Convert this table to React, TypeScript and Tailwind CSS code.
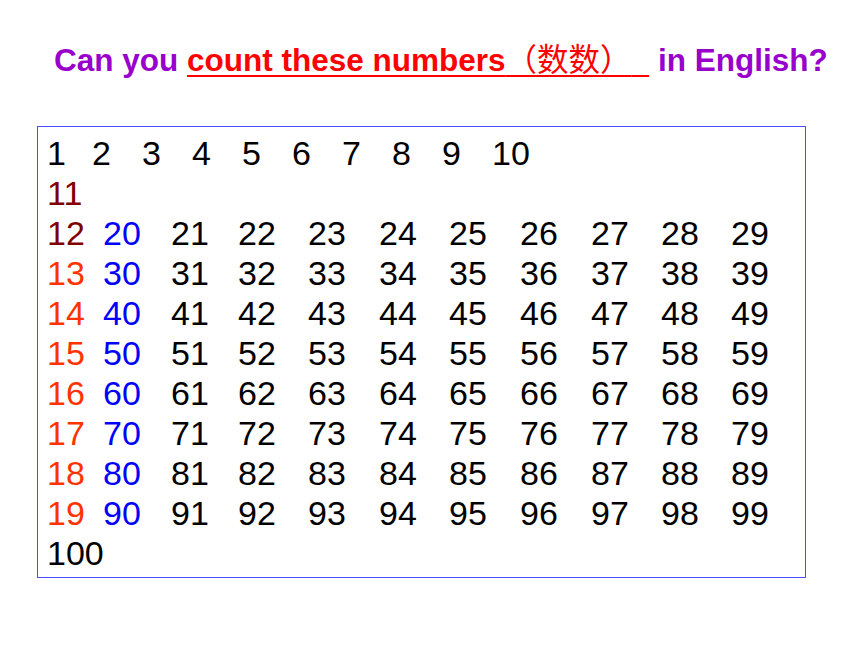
import React from "react";

const font = { fontFamily: '"Liberation Sans", "Noto Sans CJK SC", sans-serif' };

const row1Widths = [45, 50, 50, 50, 50, 50, 50, 50, 50, 50];
const tensWidths = [56, 68, 67, 70, 71, 70, 71, 71, 70, 70, 70];

const Cell = ({ w, color, children }: { w: number; color: string; children: React.ReactNode }) => (
  <span className={`shrink-0 ${color}`} style={{ width: w }}>
    {children}
  </span>
);

export default function App() {
  const tens = [2, 3, 4, 5, 6, 7, 8, 9];

  return (
    <div className="w-[860px] h-[645px] bg-white relative" style={font}>
      <div className="pt-[40px] pl-[54px] text-[31.5px] font-bold leading-[40px] whitespace-nowrap text-[#9900cc]">
        Can you{" "}
        <span className="text-[#ff0000] underline decoration-2 underline-offset-[4px]">
          count these numbers
          <span className="font-normal">（数数）</span>
          {"\u00a0\u00a0"}
        </span>{" "}
        in English?
      </div>

      <div className="ml-[37px] mt-[46px] w-[769px] h-[452px] border border-[#4d4dff] pl-[9px] pt-[6px] text-[34px] leading-[40px] text-black">
        <div className="flex h-[40px] items-center">
          {row1Widths.map((w, i) => (
            <Cell key={i} w={w} color="text-black">
              {i + 1}
            </Cell>
          ))}
        </div>
        <div className="flex h-[40px] items-center">
          <Cell w={56} color="text-[#800000]">11</Cell>
        </div>
        {tens.map((t) => (
          <div key={t} className="flex h-[40px] items-center">
            <Cell w={tensWidths[0]} color={t === 2 ? "text-[#800000]" : "text-[#ff3300]"}>
              {10 + t}
            </Cell>
            <Cell w={tensWidths[1]} color="text-[#0000ff]">
              {t * 10}
            </Cell>
            {[1, 2, 3, 4, 5, 6, 7, 8, 9].map((u) => (
              <Cell key={u} w={tensWidths[u + 1]} color="text-black">
                {t * 10 + u}
              </Cell>
            ))}
          </div>
        ))}
        <div className="flex h-[40px] items-center">
          <Cell w={80} color="text-black">100</Cell>
        </div>
      </div>
    </div>
  );
}
